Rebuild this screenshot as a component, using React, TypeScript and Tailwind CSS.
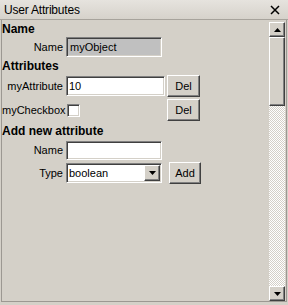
import { useState } from 'react'

const sunken =
  'border border-t-[#808080] border-l-[#808080] border-b-white border-r-white shadow-[inset_1px_1px_0_#404040,inset_-1px_-1px_0_#d4d0c8]'
const raised =
  'border border-t-white border-l-white border-b-[#404040] border-r-[#404040] shadow-[inset_-1px_-1px_0_#808080]'

function Label({ children }: { children: React.ReactNode }) {
  return <div className="w-[62px] shrink-0 pr-[1px] text-right whitespace-nowrap">{children}</div>
}

function WinButton({ children, className = '' }: { children: React.ReactNode; className?: string }) {
  return (
    <button
      className={`flex h-[22px] items-center justify-center bg-[#d4d0c8] text-[11px] text-black ${raised} ${className}`}
    >
      {children}
    </button>
  )
}

function Arrow({ down }: { down?: boolean }) {
  return (
    <svg width="7" height="4" viewBox="0 0 7 4" className="block">
      {down ? <path d="M0 0h7L3.5 4z" fill="#000" /> : <path d="M0 4h7L3.5 0z" fill="#000" />}
    </svg>
  )
}

export default function App() {
  const [attr, setAttr] = useState('10')
  const [checked, setChecked] = useState(false)
  const [newName, setNewName] = useState('')
  const [type, setType] = useState('boolean')

  return (
    <div
      className="flex h-[305px] w-[288px] flex-col overflow-hidden bg-[#d4d0c8] text-[11px] text-black"
      style={{ fontFamily: '"Liberation Sans", Arial, sans-serif' }}
    >
      {/* Title bar */}
      <div className="flex h-[20px] shrink-0 items-center justify-between border-b border-[#a7a39c] bg-gradient-to-b from-[#e6e3de] to-[#d6d2cb] pl-[4px] pr-[8px]">
        <span className="text-[12px] tracking-[-0.2px]">User Attributes</span>
        <svg width="10" height="10" viewBox="0 0 10 10">
          <path d="M1 1l8 8M9 1l-8 8" stroke="#000" strokeWidth="1.5" />
        </svg>
      </div>

      {/* Panel */}
      <div className="mx-[1px] mb-[3px] flex flex-1 border-b border-l border-r border-[#9c9892]">
        <div className="flex-1">
          <div className="flex h-[17px] items-center text-[12px] font-bold">Name</div>
          <div className="flex h-[20px] items-center">
            <Label>Name</Label>
            <div className={`ml-[2px] flex h-[20px] w-[96px] items-center bg-[#c0c0c0] px-[3px] ${sunken}`}>
              myObject
            </div>
          </div>

          <div className="flex h-[17px] items-center text-[12px] font-bold">Attributes</div>
          <div className="flex h-[24px] items-center">
            <Label>myAttribute</Label>
            <input
              value={attr}
              onChange={(e) => setAttr(e.target.value)}
              className={`ml-[2px] h-[20px] w-[99px] bg-white px-[2px] text-[11px] outline-none ${sunken}`}
            />
            <WinButton className="ml-[2px] w-[33px]">Del</WinButton>
          </div>
          <div className="flex h-[24px] items-center">
            <Label>myCheckbox</Label>
            <button
              onClick={() => setChecked((v) => !v)}
              className={`ml-[3px] h-[13px] w-[13px] bg-white ${sunken}`}
            >
              {checked && (
                <svg width="9" height="9" viewBox="0 0 9 9">
                  <path d="M1 4l2 2 5-5" stroke="#000" strokeWidth="1.5" fill="none" />
                </svg>
              )}
            </button>
            <WinButton className="ml-[87px] w-[33px]">Del</WinButton>
          </div>

          <div className="flex h-[18px] items-center text-[12px] font-bold">Add new attribute</div>
          <div className="flex h-[21px] items-center">
            <Label>Name</Label>
            <input
              value={newName}
              onChange={(e) => setNewName(e.target.value)}
              className={`ml-[2px] h-[19px] w-[96px] bg-white px-[2px] text-[11px] outline-none ${sunken}`}
            />
          </div>
          <div className="flex h-[24px] items-center">
            <Label>Type</Label>
            <div className={`ml-[2px] flex h-[20px] w-[96px] items-center bg-white pl-[2px] ${sunken}`}>
              <span className="flex-1">{type}</span>
              <button
                onClick={() => setType(type === 'boolean' ? 'string' : 'boolean')}
                className={`mr-[1px] flex h-[16px] w-[16px] items-center justify-center bg-[#d4d0c8] ${raised}`}
              >
                <Arrow down />
              </button>
            </div>
            <WinButton className="ml-[7px] w-[32px]">Add</WinButton>
          </div>
        </div>

        {/* Scrollbar */}
        <div className="mr-[1px] mt-[2px] flex w-[16px] flex-col">
          <div className={`flex h-[15px] items-center justify-center bg-[#d4d0c8] ${raised}`}>
            <Arrow />
          </div>
          <div className={`h-[69px] bg-[#d4d0c8] ${raised}`} />
          <div className="flex-1 bg-[repeating-conic-gradient(#d4d0c8_0_25%,#ffffff_0_50%)] bg-[length:2px_2px]" />
          <div className={`flex h-[15px] items-center justify-center bg-[#d4d0c8] ${raised}`}>
            <Arrow down />
          </div>
        </div>
      </div>
    </div>
  )
}
